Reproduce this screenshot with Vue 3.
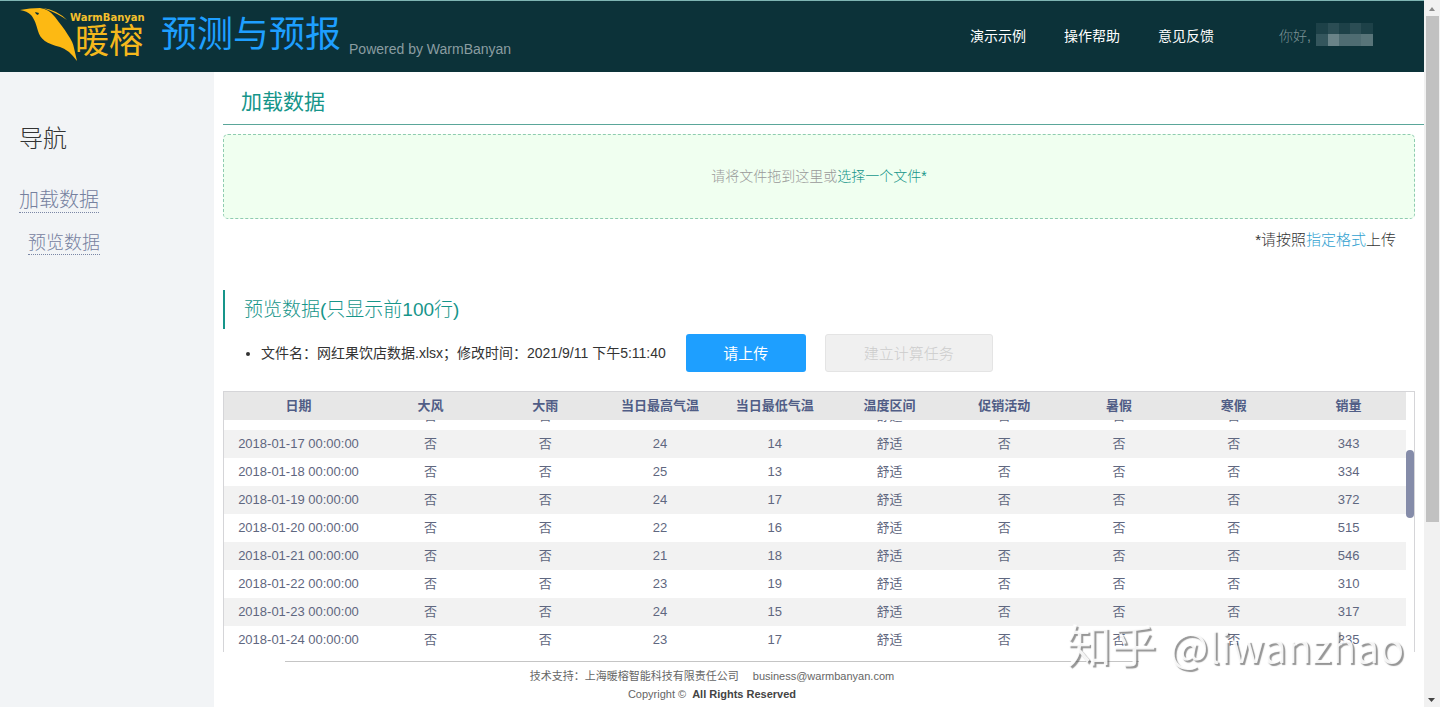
<script setup>
import { onMounted, ref } from 'vue'

const columns = ['日期', '大风', '大雨', '当日最高气温', '当日最低气温', '温度区间', '促销活动', '暑假', '寒假', '销量']
const readings = [
  ['2018-01-16', '', '', ''],
  ['2018-01-17', 24, 14, 343],
  ['2018-01-18', 25, 13, 334],
  ['2018-01-19', 24, 17, 372],
  ['2018-01-20', 22, 16, 515],
  ['2018-01-21', 21, 18, 546],
  ['2018-01-22', 23, 19, 310],
  ['2018-01-23', 24, 15, 317],
  ['2018-01-24', 23, 17, 335]
]
const rows = readings.map(([day, high, low, sales]) => [
  `${day} 00:00:00`, '否', '否', high, low, '舒适', '否', '否', '否', sales
])

const viewport = ref(null)
onMounted(() => {
  viewport.value.scrollTop = 18
})
</script>

<template>
  <div class="shell">
    <div class="page">
      <header class="topbar">
        <div class="logo">
          <svg class="bird" viewBox="0 0 58 54" aria-hidden="true">
            <path fill="#fdb913" d="M0 2 Q10 0 20 0 Q29 1 35 9 C40 16 44 20 48 27 Q53 34 54 40 L57 53 Q48 41 40 39 C27 36 20 31 18 23 C16 16 15 12 11 7 Q7 3 0 2Z" />
            <path fill="#fdb913" d="M23 0 Q37 2 47 12 Q37 5 23 0Z" />
            <path fill="#0c3239" d="M15 4l4 1-1 2-2-1z" />
          </svg>
          <div class="logo-text">
            <span class="logo-en">WarmBanyan</span>
            <span class="logo-cn">暖榕</span>
          </div>
        </div>
        <h1>预测与预报</h1>
        <span class="powered">Powered by WarmBanyan</span>
        <nav class="links">
          <a href="#demo">演示示例</a>
          <a href="#help">操作帮助</a>
          <a href="#feedback">意见反馈</a>
        </nav>
        <div class="user">
          <span>你好,</span>
          <svg width="57" height="23" viewBox="0 0 57 23" shape-rendering="crispEdges" aria-hidden="true">
            <path fill="#1d4148" d="M0 0h57v23H0z" />
            <path fill="#2b4d54" d="M12 0h11v11H12zM34 0h11v11H34z" />
            <path fill="#34565d" d="M0 11h12v12H0z" />
            <path fill="#6a8388" d="M12 11h11v12H12z" />
            <path fill="#4f6c72" d="M23 11h22v12H23z" />
            <path fill="#587479" d="M45 11h12v12H45z" />
          </svg>
        </div>
      </header>

      <div class="body">
        <aside class="sidebar">
          <h2>导航</h2>
          <a class="nav-main" href="#load">加载数据</a>
          <a class="nav-sub" href="#preview">预览数据</a>
        </aside>

        <main class="content">
          <h2 id="load" class="title">加载数据</h2>
          <div class="dropzone">
            <span>请将文件拖到这里或</span>
            <label for="file">选择一个文件*</label>
            <input id="file" type="file">
          </div>
          <p class="hint">*请按照<a href="#format">指定格式</a>上传</p>

          <h3 id="preview" class="subtitle">预览数据(只显示前100行)</h3>
          <div class="file-row">
            <ul>
              <li>文件名：网红果饮店数据.xlsx；修改时间：2021/9/11 下午5:11:40</li>
            </ul>
            <button class="upload" type="button">请上传</button>
            <button class="create" type="button" disabled>建立计算任务</button>
          </div>

          <div class="preview">
            <div ref="viewport" class="viewport">
              <table>
                <thead>
                  <tr><th v-for="name in columns" :key="name" scope="col">{{ name }}</th></tr>
                </thead>
                <tbody>
                  <tr v-for="row in rows" :key="row[0]">
                    <td v-for="(cell, i) in row" :key="i">{{ cell }}</td>
                  </tr>
                </tbody>
              </table>
            </div>
            <div class="track"><div class="thumb"></div></div>
          </div>
        </main>

        <footer class="footer">
          <div class="contact"><span>技术支持：上海暖榕智能科技有限责任公司</span><span>business@warmbanyan.com</span></div>
          <div class="rights"><span>Copyright ©</span><strong>All Rights Reserved</strong></div>
        </footer>
      </div>
    </div>

    <div class="page-scroll" aria-hidden="true">
      <svg width="16" height="16" viewBox="0 0 16 16"><path fill="#8a8a8a" d="M5 11L8 7L11 11Z" /></svg>
      <div class="page-thumb"></div>
      <svg class="down" width="16" height="16" viewBox="0 0 16 16"><path fill="#444" d="M4 7H11L7.500 11Z" /></svg>
    </div>
    <div class="watermark"><span class="brand">知乎</span><span>@liwanzhao</span></div>
  </div>
</template>

<style>
body {
  margin: 0;
}
</style>

<style scoped>
.shell {
  position: relative;
  display: flex;
  min-height: 100vh;
  background: #fff;
  color: #333;
  font-family: "Liberation Sans", "Noto Sans CJK SC", sans-serif;
  font-size: 14px;
}
.page {
  flex: 1;
  min-width: 0;
  display: flex;
  flex-direction: column;
}
h1, h2, h3, p, ul {
  margin: 0;
  font-weight: 300;
}
a {
  text-decoration: none;
}
.topbar {
  box-sizing: border-box;
  height: 72px;
  padding: 0 51px 4px 20px;
  display: flex;
  align-items: center;
  border-top: 1px solid #7fb5b3;
  background: #0c3239;
  white-space: nowrap;
}
.logo {
  display: flex;
  width: 141px;
}
.bird {
  width: 58px;
  height: 54px;
  flex: none;
}
.logo-text {
  display: flex;
  flex-direction: column;
  margin-left: -8px;
  padding-top: 2px;
  color: #f5b81c;
}
.logo-en {
  font: 700 10px/16px "DejaVu Sans", sans-serif;
  color: #f5c02c;
}
.logo-cn {
  padding-left: 5px;
  font-size: 34px;
  font-weight: 400;
  line-height: 30px;
}
h1 {
  color: #1e9fff;
  font-size: 36px;
  line-height: 66px;
  font-weight: 400;
}
.powered {
  margin: 29px 0 0 8px;
  color: #8a9da1;
  font-size: 14px;
}
.links {
  display: flex;
  gap: 38px;
  margin-left: auto;
}
.links a {
  color: #fff;
}
.user {
  display: flex;
  align-items: center;
  gap: 5px;
  margin-left: 65px;
  color: #7d9296;
  font-weight: 300;
}
.body {
  flex: 1;
  display: grid;
  grid-template-columns: 214px minmax(0, 1fr);
  grid-template-rows: 580px 1fr;
}
.sidebar {
  box-sizing: border-box;
  grid-area: 1 / 1 / 3 / 2;
  display: flex;
  flex-direction: column;
  align-items: flex-start;
  padding: 48px 19px;
  background: #f2f4f6;
}
.sidebar h2 {
  margin-bottom: 30px;
  font-size: 24px;
  line-height: 38px;
}
.sidebar a {
  border-bottom: 1px dotted #7a86a5;
  color: #76819f;
  font-weight: 300;
}
.nav-main {
  margin-bottom: 19px;
  font-size: 20px;
  line-height: 24px;
}
.nav-sub {
  margin-left: 9px;
  font-size: 18px;
  line-height: 22px;
}
.content {
  grid-area: 1 / 2 / 2 / 3;
  padding-left: 9px;
}
.title {
  padding: 8px 18px 0;
  border-bottom: 1px solid #5aa699;
  color: #16958a;
  font-size: 21px;
  font-weight: 400;
  line-height: 44px;
}
.dropzone {
  position: relative;
  box-sizing: border-box;
  height: 85px;
  margin: 9px 9px 0 0;
  padding-bottom: 3px;
  display: flex;
  align-items: center;
  justify-content: center;
  border: 1px dashed #8fccb0;
  border-radius: 5px;
  background: #f0fff0;
  color: #999;
  font-weight: 300;
}
.dropzone label {
  color: #16958a;
  cursor: pointer;
}
.dropzone input {
  position: absolute;
  width: 1px;
  height: 1px;
  opacity: 0;
}
.hint {
  margin: 10px 28px 0 0;
  text-align: right;
  font-size: 15px;
  line-height: 22px;
}
.hint a {
  color: #2f9fd0;
}
.subtitle {
  margin-top: 39px;
  padding-left: 19px;
  border-left: 2px solid #16958a;
  color: #16958a;
  font-size: 19px;
  line-height: 39px;
}
.file-row {
  display: flex;
  align-items: center;
  margin-top: 5px;
}
.file-row ul {
  padding-left: 38px;
  font-weight: 400;
  line-height: 24px;
}
button {
  height: 38px;
  box-sizing: border-box;
  padding: 0 0 2px;
  border: 0;
  border-radius: 3px;
  font-family: inherit;
  font-size: 15px;
  font-weight: 300;
}
.upload {
  width: 120px;
  margin-left: 20px;
  background: #1e9fff;
  color: #fff;
  font-weight: 400;
}
.create {
  width: 168px;
  margin-left: 19px;
  border: 1px solid #e4e4e4;
  background: #f0f0f0;
  color: #ccc;
}
.preview {
  box-sizing: border-box;
  height: 261px;
  margin: 19px 9px 0 0;
  display: flex;
  border: solid #d5d5d8;
  border-width: 1px 1px 0;
}
.viewport {
  flex: 1;
  overflow-y: auto;
  scrollbar-width: none;
}
table {
  width: 100%;
  table-layout: fixed;
  border-collapse: collapse;
  color: #5f6780;
  font-size: 13px;
  text-align: center;
}
th {
  position: sticky;
  top: 0;
  box-sizing: border-box;
  height: 28px;
  padding: 0 0 4px;
  background: #e7e7e7;
  color: #505d86;
}
th:first-child {
  width: 149px;
}
td {
  height: 28px;
  padding: 0;
  line-height: 20px;
}
tbody tr:nth-child(even) {
  background: #f2f2f2;
}
.track {
  width: 8px;
  padding-top: 58px;
}
.thumb {
  height: 68px;
  border-radius: 4px;
  background: #858ca9;
}
.footer {
  grid-area: 2 / 1 / 3 / 3;
  justify-self: center;
  box-sizing: border-box;
  width: 60%;
  margin-top: 9px;
  padding-top: 5px;
  border-top: 1px solid #c5c5c5;
  color: #666;
  font-size: 11px;
  line-height: 18px;
}
.footer div {
  display: flex;
  justify-content: center;
}
.contact {
  gap: 14px;
}
.rights {
  gap: 6px;
}
.footer strong {
  color: #444;
}
.page-scroll {
  width: 16px;
  display: flex;
  flex-direction: column;
  background: #f1f1f1;
}
.page-thumb {
  height: 506px;
  margin: 0 1px 0 2px;
  background: #c1c1c1;
}
.down {
  margin-top: auto;
}
.watermark {
  position: absolute;
  right: 36px;
  bottom: 32px;
  display: flex;
  align-items: baseline;
  gap: 13px;
  color: rgba(255, 255, 255, 0.9);
  font-family: "Noto Sans CJK SC", sans-serif;
  font-size: 41px;
  line-height: 60px;
  text-shadow: 2px 2px 1px rgba(80, 80, 80, 0.6);
  pointer-events: none;
}
.brand {
  font-size: 45px;
}
</style>
